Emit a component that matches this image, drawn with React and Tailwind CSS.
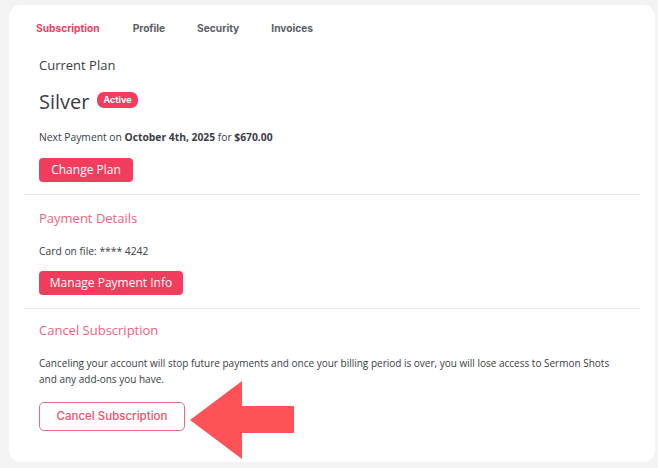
export default function App() {
  const tabs = ["Subscription", "Profile", "Security", "Invoices"];

  return (
    <div className="min-h-screen bg-[#f3f3f3] pt-[5px] pl-[9px] pr-[3px] pb-[6px]" style={{ fontFamily: "'Open Sans', sans-serif" }}>
      <div className="relative h-[457px] rounded-[12px] bg-white px-[15px] text-[#3a3d45]">
        {/* tabs */}
        <div className="flex pl-[12px] pt-[16px] text-[10.2px] leading-[14px] font-bold" style={{ fontFamily: "Inter, sans-serif" }}>
          {tabs.map((t, i) => (
            <span
              key={t}
              className={i === 0 ? "text-[#f23d5f] mr-[33px]" : "text-[#5b5e66] mr-[32px]"}
            >
              {t}
            </span>
          ))}
        </div>

        {/* current plan */}
        <div className="pl-[15px]">
          <div className="mt-[21px] text-[13px] leading-[18px]">Current Plan</div>
          <div className="mt-[15px] flex items-center h-[26px]">
            <span className="text-[20px] leading-[26px]">Silver</span>
            <span className="ml-[8px] -mt-[4px] rounded-[7px] bg-[#f23d5f] px-[6px] text-[9px] leading-[16px] font-bold text-white" style={{ fontFamily: "Inter, sans-serif" }}>
              Active
            </span>
          </div>
          <div className="mt-[15px] text-[10.3px] leading-[14px]">
            Next Payment on <b>October 4th, 2025</b> for <b>$670.00</b>
          </div>
          <button className="mt-[14px] h-[24px] w-[94px] rounded-[4px] bg-[#f23d5f] text-[12px] text-white">
            Change Plan
          </button>
        </div>

        <div className="mt-[12px] border-t border-[#e8e8e8]" />

        {/* payment details */}
        <div className="pl-[15px]">
          <div className="mt-[14px] text-[13px] leading-[18px] text-[#f0637d]">Payment Details</div>
          <div className="mt-[17px] text-[10.3px] leading-[14px]">Card on file: **** 4242</div>
          <button className="mt-[13px] h-[24px] w-[144px] rounded-[4px] bg-[#f23d5f] text-[12px] text-white">
            Manage Payment Info
          </button>
        </div>

        <div className="mt-[13px] border-t border-[#e8e8e8]" />

        {/* cancel */}
        <div className="pl-[15px]">
          <div className="mt-[12px] text-[13px] leading-[18px] text-[#f0637d]">Cancel Subscription</div>
          <p className="mt-[16px] text-[10px] leading-[16px]">
            <span className="block whitespace-nowrap">
              Canceling your account will stop future payments and once your billing period is over, you will lose access to Sermon Shots
            </span>
            <span className="block">and any add-ons you have.</span>
          </p>
          <button
            className="mt-[15px] h-[29px] w-[146px] rounded-[5px] border border-[#f06a82] bg-white text-[11.5px] font-medium text-[#ee4f6c]"
            style={{ fontFamily: "Inter, sans-serif" }}
          >
            Cancel Subscription
          </button>
        </div>

        <svg className="absolute left-[181px] top-[376px]" width="104" height="78" viewBox="0 0 104 78">
          <polygon points="0,39 52,0 52,25 104,25 104,52 52,52 52,78" fill="#ff5257" />
        </svg>
      </div>
    </div>
  );
}
